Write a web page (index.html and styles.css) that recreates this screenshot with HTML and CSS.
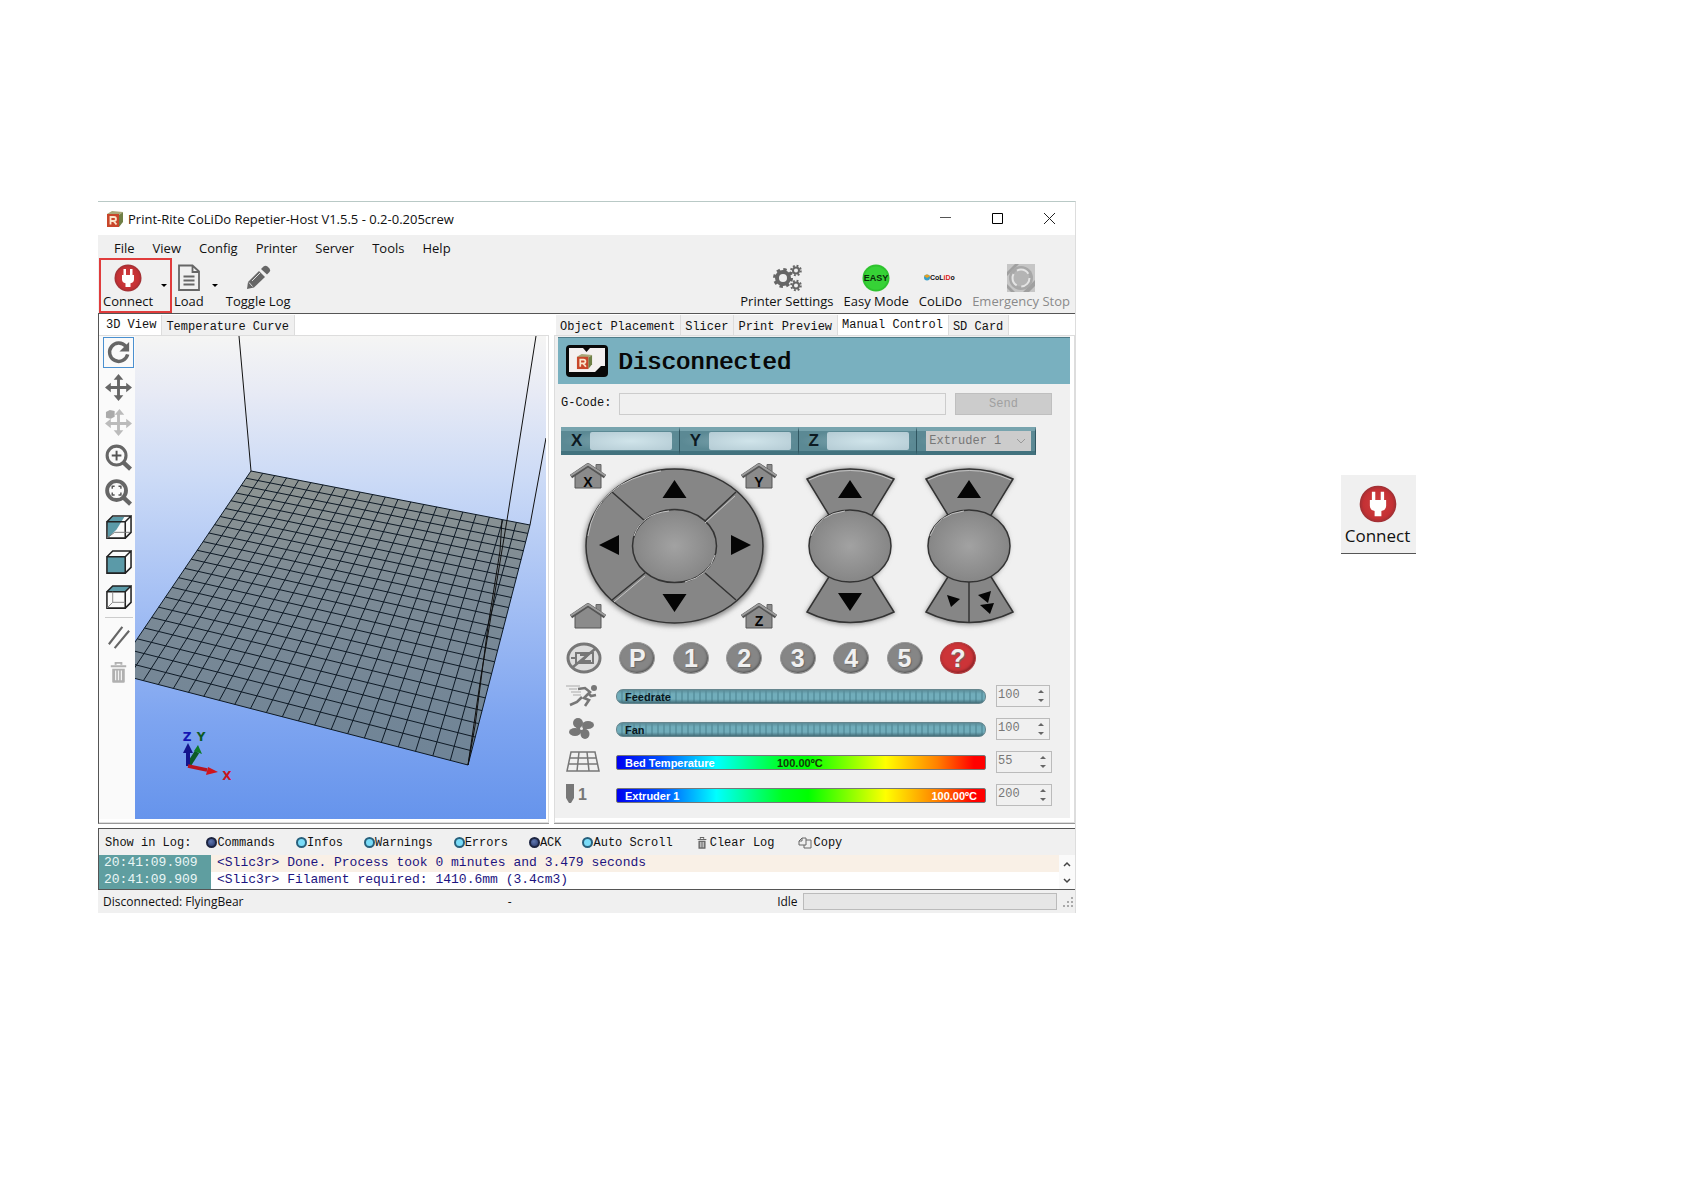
FILE: index.html
```html
<!DOCTYPE html>
<html lang="en">
<head>
<meta charset="utf-8">
<title>Print-Rite CoLiDo Repetier-Host</title>
<link rel="stylesheet" href="styles.css">
</head>
<body>
<svg class="defs" width="0" height="0" aria-hidden="true">
  <defs>
    <radialGradient id="red"><stop offset="0" stop-color="#d04040"/><stop offset=".8" stop-color="#c43034"/><stop offset="1" stop-color="#9c3034"/></radialGradient>
    <radialGradient id="hub"><stop offset="0" stop-color="#a2a2a2"/><stop offset="1" stop-color="#868686"/></radialGradient>
    <symbol id="plug" viewBox="0 0 28 28">
      <circle cx="14" cy="14" r="13.5" fill="url(#red)"/>
      <path d="M9.500 5h2.500v6h4V5h2.500v6H20v4.500q0 3-3.500 3.700V23h-5v-3.800Q8 18.500 8 15.500V11h1.500z" fill="#fff"/>
    </symbol>
    <symbol id="cube-r" viewBox="0 0 18 18">
      <path d="M1 4l5-3 11 1-4 3z" fill="#a9a878"/><path d="M13 5l4-3v10l-4 5z" fill="#6f7f46"/>
      <rect x="1" y="4" width="12" height="13" fill="#c8462a"/>
      <path d="M4.500 14.500V7H8q2 0 2 2t-2 2H5M7.500 11l3 3.500" fill="none" stroke="#fbe6cd" stroke-width="1.800"/>
    </symbol>
    <symbol id="house" viewBox="0 0 36 26">
      <path d="M5 12v13h26V12L18 3z" fill="#8b8b8b" stroke="#555"/>
      <path d="M26 7V1.500h5V12" fill="#8b8b8b" stroke="#666"/>
      <path d="M1 13.500L18 2l17 11.500" fill="none" stroke="#555" stroke-width="4"/>
      <path d="M1 12.500L18 1.500l17 11" fill="none" stroke="#9c9c9c" stroke-width="2"/>
    </symbol>
    <symbol id="trash" viewBox="0 0 18 22">
      <path d="M6 3V1h6v2M1 4.500h16" fill="none" stroke="currentColor" stroke-width="2"/>
      <path d="M2.500 7h13v13.500q0 1-1 1h-11q-1 0-1-1z" fill="currentColor"/>
      <path d="M6 9v10M9 9v10M12 9v10" stroke="#f2f2f2" stroke-width="1.300"/>
    </symbol>
  </defs>
</svg>

<main class="page">
  <section class="window">
    <header class="titlebar">
      <svg class="app-icon" width="18" height="18"><use href="#cube-r"/></svg>
      <h1 class="title">Print-Rite CoLiDo Repetier-Host V1.5.5 - 0.2-0.205crew</h1>
      <button class="winbtn" aria-label="Minimize"><svg width="11" height="11"><path d="M0 4.500h11" stroke="#555"/></svg></button>
      <button class="winbtn" aria-label="Maximize"><svg width="11" height="11"><path d="M.5.5h10v10H.5z" fill="none" stroke="#000"/></svg></button>
      <button class="winbtn" aria-label="Close"><svg width="11" height="11"><path d="M0 0l11 11M11 0L0 11" stroke="#222"/></svg></button>
    </header>
    <nav class="menubar">
      <button>File</button><button>View</button><button>Config</button><button>Printer</button><button>Server</button><button>Tools</button><button>Help</button>
    </nav>
    <div class="toolbar">
      <div class="tool-group marked">
        <button class="tool"><svg width="28" height="28"><use href="#plug"/></svg>Connect</button>
        <button class="drop" aria-label="Connect options"></button>
      </div>
      <div class="tool-group">
        <button class="tool"><svg width="28" height="28" viewBox="0 0 28 28"><path d="M4 1.500h13.500l6.500 6v18.500H4zM17.500 1.500v6.500H24M8.500 12.500h11M8.500 16.500h11M8.500 20.500h11" fill="none" stroke="#666" stroke-width="1.800"/></svg>Load</button>
        <button class="drop" aria-label="Load options"></button>
      </div>
      <button class="tool"><svg width="28" height="28" viewBox="0 0 28 28"><path d="M3 25l1-7L15 7l6 6-11 10.500z" fill="#666"/><path d="M17 5l2.500-2.500q2-1.500 4 0l2 2q1.500 2 0 3.500L23 10.500z" fill="#666"/><path d="M5 18.500l3.500 4M8 17l8-8" stroke="#ddd" fill="none"/></svg>Toggle Log</button>
      <span class="spacer"></span>
      <button class="tool"><svg width="30" height="28" viewBox="0 0 30 28" fill="none" stroke="#666"><circle cx="11" cy="14" r="6" stroke-width="4"/><circle cx="11" cy="14" r="8.500" stroke-width="3" stroke-dasharray="3.340 3.340"/><circle cx="24" cy="6.500" r="3" stroke-width="2"/><circle cx="24" cy="6.500" r="4.800" stroke-width="2" stroke-dasharray="1.890 1.880"/><circle cx="24" cy="21.500" r="3" stroke-width="2"/><circle cx="24" cy="21.500" r="4.800" stroke-width="2" stroke-dasharray="1.890 1.880"/></svg>Printer Settings</button>
      <button class="tool"><svg width="28" height="28" viewBox="0 0 28 28"><circle cx="14" cy="14" r="13.500" fill="#2ec32e"/><circle cx="14" cy="14" r="11.500" fill="#36d236"/><text x="14" y="17" text-anchor="middle" class="easy">EASY</text></svg>Easy Mode</button>
      <button class="tool"><svg width="34" height="28" viewBox="0 0 34 28"><circle cx="4" cy="13.500" r="3" fill="#39a0c8"/><path d="M1 12q3-3 6 0l-3 2z" fill="#e8a020"/><text x="7" y="16" class="brand">CoL<tspan fill="#d22">iD</tspan>o</text></svg>CoLiDo</button>
      <button class="tool" disabled><svg width="28" height="28" viewBox="0 0 28 28"><path d="M0 0h28v28H0z" fill="#c6c6c6"/><path d="M0 8L8 0h4L0 12zM16 28L28 16v6l-6 6zM0 20l8 8H4l-4-4z" fill="#a0a0a0"/><circle cx="14" cy="14" r="12" fill="#a8a8a8"/><circle cx="14" cy="14" r="8.500" fill="#b4b4b4" stroke="#e4e4e4" stroke-width="2" stroke-dasharray="13 4.800"/></svg>Emergency Stop</button>
    </div>

    <div class="panes">
      <section class="pane pane-view">
        <div class="tabs" role="tablist">
          <button role="tab" aria-selected="true">3D View</button><button role="tab" aria-selected="false">Temperature Curve</button>
        </div>
        <div class="view-body">
          <div class="view-tools">
            <button class="vt on" aria-label="Rotate"><svg viewBox="0 0 28 28"><path d="M21.500 7.500A9.500 9.500 0 1 0 23.500 16" fill="none" stroke="#666" stroke-width="3.600"/><path d="M25 3v10H15z" fill="#666"/></svg></button>
            <button class="vt" aria-label="Move view"><svg viewBox="0 0 28 28"><path d="M14 4v20M4 14h20" stroke="#666" stroke-width="3"/><path d="M14 0l5 6H9zM14 28l5-6H9zM0 14l6-5v10zM28 14l-6-5v10z" fill="#666"/></svg></button>
            <button class="vt" aria-label="Move object" disabled><svg viewBox="0 0 28 28"><path d="M14 4v20M4 15h20" stroke="#bbb" stroke-width="3"/><path d="M15 0l5 6H10zM14 28l5-6H9zM0 15l6-5v10zM28 15l-6-5v10z" fill="#bbb"/><path d="M1 3l4-2 5 1v6l-4 2-5-1z" fill="#aaa"/></svg></button>
            <button class="vt" aria-label="Zoom in"><svg viewBox="0 0 28 28"><circle cx="12" cy="12" r="9.800" fill="none" stroke="#666" stroke-width="3.200"/><path d="M19 19l7.500 7" stroke="#666" stroke-width="4.500"/><path d="M12 7v10M7 12h10" stroke="#555" stroke-width="2"/></svg></button>
            <button class="vt" aria-label="Fit view"><svg viewBox="0 0 28 28"><circle cx="12" cy="12" r="9.800" fill="none" stroke="#666" stroke-width="4"/><path d="M19 19l7.500 7" stroke="#666" stroke-width="4.500"/><path d="M7.500 10V7.500H10M14 7.500h2.500V10M16.500 14v2.500H14M10 16.500H7.500V14" fill="none" stroke="#555" stroke-width="1.500"/></svg></button>
            <button class="vt" aria-label="Perspective"><svg viewBox="0 0 28 28"><path d="M2 8l6-5h12L12 16l-9 9z" fill="#5b9aa8"/><path d="M2 8h19v17H2zM2 8l6-6h19l-6 6M27 2v17l-6 6" fill="none" stroke="#222" stroke-width="1.600"/><path d="M10 19h16M2 25l8-6" stroke="#777" fill="none"/></svg></button>
            <button class="vt" aria-label="Front view"><svg viewBox="0 0 28 28"><path d="M2 8h19v17H2z" fill="#5b9aa8"/><path d="M2 8h19v17H2zM2 8l6-6h19l-6 6M27 2v17l-6 6" fill="none" stroke="#222" stroke-width="1.600"/></svg></button>
            <button class="vt" aria-label="Top view"><svg viewBox="0 0 28 28"><path d="M2 8l6-6h19l-6 6z" fill="#5b9aa8"/><path d="M2 8h19v17H2zM2 8l6-6h19l-6 6M27 2v17l-6 6" fill="none" stroke="#222" stroke-width="1.600"/><path d="M8 8v11h13M2 25l6-6" stroke="#888" fill="none"/></svg></button>
            <hr>
            <button class="vt" aria-label="Parallel projection"><svg viewBox="0 0 28 28"><path d="M4 21L18 3M10 25L25 7" stroke="#666" stroke-width="2.200"/></svg></button>
            <button class="vt" aria-label="Delete" disabled><svg viewBox="-5 -3 28 28"><use href="#trash" width="18" height="22"/></svg></button>
          </div>
          <svg class="scene" viewBox="0 0 411 483" preserveAspectRatio="xMidYMid slice" role="img" aria-label="Print bed">
            <defs>
              <linearGradient id="sky" x2="0" y2="1"><stop offset="0" stop-color="#f5f5f4"/><stop offset=".12" stop-color="#e7eaf5"/><stop offset=".3" stop-color="#cbdaf6"/><stop offset=".55" stop-color="#a4bff4"/><stop offset=".8" stop-color="#7da4f0"/><stop offset="1" stop-color="#6694ec"/></linearGradient>
              <linearGradient id="bed" x2="0" y2="1"><stop offset="0" stop-color="#8f9592"/><stop offset=".4" stop-color="#7c8a95"/><stop offset="1" stop-color="#6f8497"/></linearGradient>
            </defs>
            <rect width="411" height="483" fill="url(#sky)"/>
            <path d="M116 135L395 189 333 429-21 337z" fill="url(#bed)"/>
            <path id="mesh" d="" fill="none" stroke="#0e1a26"/>
            <path d="M104 0L116 135M401 0L372 184 346 340 333 429M411 102L395 189M367 184L365 215 353 290 340 390 333 429" fill="none" stroke="#111"/>
            <path d="M53 430L62 416" stroke="#0d5a26" stroke-width="5"/><path d="M63 409l4 9-8-3z" fill="#0d7a26"/>
            <path d="M53 430V414" stroke="#14148c" stroke-width="4"/><path d="M53 407l5 10H48z" fill="#14148c"/>
            <path d="M53 430L72 434" stroke="#b81420" stroke-width="3.500"/><path d="M83 436l-12 3 2-8z" fill="#d0141c"/>
            <text x="52" y="405" class="axis" fill="#1414b4">Z</text><text x="66" y="405" class="axis" fill="#0d5a26">Y</text><text x="92" y="444" class="axis" fill="#c8141c">X</text>
          </svg>
        </div>
      </section>

      <section class="pane pane-control">
        <div class="tabs" role="tablist">
          <button role="tab" aria-selected="false">Object Placement</button><button role="tab" aria-selected="false">Slicer</button><button role="tab" aria-selected="false">Print Preview</button><button role="tab" aria-selected="true">Manual Control</button><button role="tab" aria-selected="false">SD Card</button>
        </div>
        <div class="control-body">
          <div class="status-head">
            <svg width="42" height="32" viewBox="0 0 42 32"><rect width="42" height="32" rx="4" fill="#080808"/><path d="M3 3h14l3.500 4L24 3h15v18h-4l-6 6H3z" fill="#f4f0f0"/><use href="#cube-r" x="10" y="8" width="17" height="17"/></svg>
            <h2>Disconnected</h2>
          </div>
          <form class="gcode">
            <label for="gcode">G-Code:</label>
            <input id="gcode" type="text" disabled>
            <button type="button" disabled>Send</button>
          </form>
          <div class="jog">
            <div class="coords">
              <label class="coord">X<input type="text" readonly></label>
              <label class="coord">Y<input type="text" readonly></label>
              <label class="coord">Z<input type="text" readonly></label>
              <div class="coord pick">
                <select aria-label="Extruder" disabled><option>Extruder 1</option></select>
                <svg width="10" height="6"><path d="M1 1l4 4 4-4" fill="none" stroke="#999"/></svg>
              </div>
            </div>
            <svg class="pads" viewBox="0 0 468 174" role="group" aria-label="Jog controls">
              <defs><filter id="soft" x="-20%" y="-20%" width="140%" height="140%"><feGaussianBlur stdDeviation="2.500"/></filter></defs>
              <g fill="#888" filter="url(#soft)">
                <ellipse cx="114" cy="89" rx="91" ry="79"/>
                <path id="hourglass" d="M245 20Q289 0 334 20L312 54Q345 88 312 120L334 155Q289 178 245 155L267 120Q233 88 267 54z"/>
                <use href="#hourglass" x="119"/>
              </g>
              <g fill="#868686" stroke="#333" stroke-width="1.500">
                <ellipse cx="113.500" cy="88" rx="88.500" ry="77"/>
                <path d="M51 34L84 63M175 34L144 63M51 142L84 115M175 142L144 115"/>
                <ellipse cx="113.500" cy="88" rx="42" ry="36.500" fill="url(#hub)"/>
                <g id="zpad">
                  <path d="M246 21Q289 1 333 21L308 62H271z"/>
                  <path d="M271 114h37l25 40Q289 175 246 154z"/>
                  <ellipse cx="289" cy="88" rx="41" ry="36" fill="url(#hub)"/>
                </g>
                <use href="#zpad" x="119"/>
                <path d="M408 124v41"/>
              </g>
              <g fill="none" stroke="#c4c4c4">
                <path d="M27 78Q35 24 100 13M73 78Q80 56 108 53M250 78Q258 56 284 53M369 78Q377 56 403 53M144 65L174 38M53 144L84 118M248 22Q289 3 331 22M367 22Q408 3 450 22M154 97Q148 118 124 124"/>
              </g>
              <path d="M113.500 22l12 18h-24zM113.500 154l12-18h-24zM38 87l20-10v20zM190 87l-20-10v20zM289 22l12 18h-24zM289 153l12-18h-24zM408 22l12 18h-24zM386 137l13 4-9 8zM417 137l13-4-3 12zM419 147l14-2-4 11z" fill="#050505"/>
              <use href="#house" x="9" y="5" width="36" height="26"/><use href="#house" x="180" y="5" width="36" height="26"/><use href="#house" x="9" y="145" width="36" height="26"/><use href="#house" x="180" y="145" width="36" height="26"/>
              <text x="27" y="29" class="home">X</text><text x="198" y="29" class="home">Y</text><text x="198" y="168" class="home">Z</text>
            </svg>
          </div>
          <div class="rounds">
            <button class="round off" aria-label="Motors off"><svg width="36" height="32" viewBox="0 0 36 32"><ellipse cx="18" cy="16" rx="16" ry="14" fill="#ddd" stroke="#777" stroke-width="3"/><path d="M5 16h5M10 11h17v10H10zM14 13h8l-6 6h9" fill="none" stroke="#777" stroke-width="2"/><path d="M7 25L29 7" stroke="#777" stroke-width="2.500"/></svg></button>
            <button class="round">P</button><button class="round">1</button><button class="round">2</button><button class="round">3</button><button class="round">4</button><button class="round">5</button><button class="round help">?</button>
          </div>
          <div class="sliders">
            <div class="row">
              <svg width="34" height="24" viewBox="0 0 34 24"><circle cx="28" cy="4" r="3" fill="#777"/><path d="M12 5l7-1 5 4-6 6 5 2-4 6M16 13l-5 5-7 3M22 9l3 3 5-1" fill="none" stroke="#777" stroke-width="2.600"/><path d="M0 2h14M3 5h8M5 8h10M7 11h8" stroke="#aaa"/></svg>
              <div class="bar"><input id="feed" type="range" disabled><label for="feed">Feedrate</label></div>
              <div class="spin"><input type="number" value="100" aria-label="Feedrate percent" disabled><span class="arrows"><i></i><i></i></span></div>
            </div>
            <div class="row">
              <svg width="34" height="24" viewBox="0 0 34 24" fill="#777"><ellipse cx="12" cy="6" rx="5" ry="5"/><ellipse cx="22" cy="8" rx="6" ry="4"/><ellipse cx="9" cy="15" rx="6" ry="4"/><ellipse cx="19" cy="17" rx="4.500" ry="5"/><path d="M9 9l3-3 9 11-4 2zM9 17l-1-4 14-6 1 4z"/><circle cx="15.500" cy="11.500" r="1.500" fill="#eee"/></svg>
              <div class="bar"><input id="fan" type="range" disabled><label for="fan">Fan</label></div>
              <div class="spin"><input type="number" value="100" aria-label="Fan percent" disabled><span class="arrows"><i></i><i></i></span></div>
            </div>
            <div class="row wide">
              <svg width="34" height="24" viewBox="0 0 34 24"><path d="M5 2h24l4 19H1zM3.500 8h27M2.500 14h29M13 2l-2 19M21 2l2 19" fill="none" stroke="#777" stroke-width="1.500"/></svg>
              <div class="bar heat"><span>Bed Temperature</span><b class="mid">100.00ºC</b></div>
              <div class="spin"><input type="number" value="55" aria-label="Bed temperature" disabled><span class="arrows"><i></i><i></i></span></div>
            </div>
            <div class="row wide">
              <svg width="34" height="24" viewBox="0 0 34 24"><path d="M0 1h8v14l-3 5H3l-3-5z" fill="#777"/><text x="12" y="17" class="extruder-no">1</text></svg>
              <div class="bar heat"><span>Extruder 1</span><b class="end">100.00ºC</b></div>
              <div class="spin"><input type="number" value="200" aria-label="Extruder temperature" disabled><span class="arrows"><i></i><i></i></span></div>
            </div>
          </div>
        </div>
      </section>
    </div>

    <section class="log">
      <div class="log-bar">
        <span class="log-title">Show in Log:</span>
        <div class="filters">
          <label><input type="checkbox">Commands</label>
          <label><input type="checkbox" checked>Infos</label>
          <label><input type="checkbox" checked>Warnings</label>
          <label><input type="checkbox" checked>Errors</label>
          <label><input type="checkbox">ACK</label>
          <label><input type="checkbox" checked>Auto Scroll</label>
          <button><svg width="12" height="12" color="#666"><use href="#trash"/></svg>Clear Log</button>
          <button><svg width="14" height="12" viewBox="0 0 14 12"><path d="M4 1h4v7H1V4zM4 1v3H1M8 3h5v8H6V8" fill="none" stroke="#666"/></svg>Copy</button>
        </div>
      </div>
      <div class="log-view">
        <table>
          <tr><td class="time">20:41:09.909</td><td>&lt;Slic3r&gt; Done. Process took 0 minutes and 3.479 seconds</td></tr>
          <tr><td class="time">20:41:09.909</td><td>&lt;Slic3r&gt; Filament required: 1410.6mm (3.4cm3)</td></tr>
        </table>
        <div class="scroll">
          <svg width="8" height="6"><path d="M1 5l3-3 3 3" fill="none" stroke="#444" stroke-width="1.500"/></svg>
          <svg width="8" height="6"><path d="M1 1l3 3 3-3" fill="none" stroke="#444" stroke-width="1.500"/></svg>
        </div>
      </div>
    </section>
    <footer class="statusbar">
      <span class="conn">Disconnected: FlyingBear</span><span class="dash">-</span><span class="idle">Idle</span>
      <span class="progress"></span>
      <svg width="10" height="10"><path d="M8 0h2v2H8zM4 4h2v2H4zM8 4h2v2H8zM0 8h2v2H0zM4 8h2v2H4zM8 8h2v2H8z" fill="#aaa"/></svg>
    </footer>
  </section>

  <aside class="side">
    <button class="card"><svg width="38" height="38"><use href="#plug"/></svg>Connect</button>
  </aside>
</main>
<script src="script.js"></script>
</body>
</html>
```
FILE: script.js
```js
// Print bed mesh: a square grid projected onto the bed's four corners.
const corners = [[116, 135], [395, 189], [333, 429], [-21, 337]];
const cells = 22;

function projector([[x0, y0], [x1, y1], [x2, y2], [x3, y3]]) {
  const dx1 = x1 - x2, dx2 = x3 - x2, sx = x0 - x1 + x2 - x3;
  const dy1 = y1 - y2, dy2 = y3 - y2, sy = y0 - y1 + y2 - y3;
  const det = dx1 * dy2 - dx2 * dy1;
  const g = (sx * dy2 - dx2 * sy) / det;
  const h = (dx1 * sy - sx * dy1) / det;
  return (u, v) => {
    const w = g * u + h * v + 1;
    const x = ((x1 - x0 + g * x1) * u + (x3 - x0 + h * x3) * v + x0) / w;
    const y = ((y1 - y0 + g * y1) * u + (y3 - y0 + h * y3) * v + y0) / w;
    return x.toFixed(1) + " " + y.toFixed(1);
  };
}

const at = projector(corners);
let d = "";
for (let i = 0; i <= cells; i++) {
  const t = i / cells;
  d += `M${at(t, 0)}L${at(t, 1)}M${at(0, t)}L${at(1, t)}`;
}
document.getElementById("mesh").setAttribute("d", d);
```
FILE: styles.css
```css
* { box-sizing: border-box; }
body { margin: 0; background: #fff; color: #111; font: 12px/16px "Open Sans", "Noto Sans", sans-serif; }
button, input, select { font: inherit; color: inherit; margin: 0; padding: 0; border: 0; background: none; border-radius: 0; }
svg { display: block; flex: none; }
.defs { position: absolute; }

.page { display: grid; grid-template-columns: 978fr 608fr; align-items: start; padding: 201px 0 0 98px; }
.window { background: #f0f0f0; border-top: 1px solid #b9c9c6; border-right: 1px solid #ddd; min-width: 0; }

.titlebar { display: flex; align-items: center; height: 33px; background: #fff; padding-left: 8px; }
.title { flex: 1; margin: 0 0 0 4px; font-size: 13px; font-weight: 400; white-space: nowrap; }
.winbtn { width: 52px; height: 33px; display: grid; place-items: center; }

.menubar { display: flex; gap: 18px; height: 23px; padding: 2px 16px 0; font-size: 13px; }

.toolbar { display: flex; height: 55px; padding: 0 2px 0 1px; }
.tool-group { display: flex; }
.tool { display: flex; flex-direction: column; align-items: center; padding: 6px 3px 0; font-size: 13px; line-height: 18px; white-space: nowrap; margin-right: 4px; }
.tool:last-child { margin-right: 0; }
.tool:disabled { color: #8a8a8a; }
.tool-group .tool { margin: 0; padding: 6px 1px 0; }
.marked { width: 73px; border: 2px solid #e03c3c; justify-content: space-between; margin-right: 1px; }
.marked .tool { padding: 4px 0 0 2px; }
.drop { width: 12px; display: grid; place-items: center; }
.drop::before { content: ""; border: 3px solid transparent; border-top-color: #000; border-bottom: 0; }
.tool-group:not(.marked) .drop { margin: 0 2px 0 4px; }
.spacer { flex: 1; }
.easy { font: bold 9px "Liberation Sans", sans-serif; fill: #0a2a0a; }
.brand { font: bold 7px "Liberation Sans", sans-serif; fill: #111; }

.panes { display: grid; grid-template-columns: 451fr 521fr; gap: 5px; padding-bottom: 4px; background: #fff; border-top: 1px solid #555; }
.pane { display: flex; flex-direction: column; min-width: 0; border-bottom: 1px solid #999; font-family: "Liberation Mono", monospace; }
.pane-view { border-left: 1px solid #555; }
.tabs { display: flex; height: 21px; padding: 1px 0 0; }
.tabs button { height: 20px; padding: 3px 5px 0 4px; background: #f0f0f0; border-right: 1px solid #ddd; white-space: nowrap; }
.tabs button[aria-selected="true"] { background: #fff; padding-bottom: 2px; padding-top: 1px; }
.pane-view .tabs button:first-child { padding-left: 7px; padding-right: 5px; }
.pane-control .tabs { padding-left: 2px; }

.view-body { flex: 1; display: flex; border: 1px solid #ddd; border-left: 0; padding: 0 2px 3px 0; }
.view-tools { flex: none; width: 36px; padding: 1px 1px 0 4px; background: #fafafa; display: flex; flex-direction: column; gap: 4px; }
.vt { height: 31px; display: grid; place-items: center; }
.vt svg { width: 27px; height: 27px; }
.vt.on { border: 1px solid #4a90d0; }
.vt:disabled { color: #b0b0b0; }
.view-tools hr { width: 28px; margin: 0 auto; border: 0; border-top: 1px solid #ccc; }
.scene { flex: 1; min-width: 0; height: 483px; }
.axis { font: bold 12px "DejaVu Sans", sans-serif; text-anchor: middle; }

.control-body { flex: 1; border: 1px solid #ddd; padding: 1px 4px 2px 3px; background: #f0f0f0; box-shadow: inset -2px -2px 0 2px #fff; }
.status-head { display: flex; align-items: center; gap: 10px; height: 47px; padding: 0 8px; background: #79b0bf; border-top: 1px solid #4f7c88; }
.status-head h2 { margin: 0; padding-top: 3px; font: 24px/32px "Liberation Mono", monospace; color: #080808; text-shadow: 1px 0 #080808; }
.gcode { display: flex; align-items: center; height: 22px; margin: 9px 18px 0 3px; }
.gcode label { width: 58px; padding-bottom: 3px; }
.gcode input { flex: 1; min-width: 0; height: 22px; border: 1px solid #ccc; }
.gcode button { width: 97px; height: 22px; margin-left: 9px; background: #ccc; border: 1px solid #bfbfbf; color: #a0a0a0; }

.jog { margin: 12px 34px 0 3px; }
.coords { display: grid; grid-template-columns: repeat(4, minmax(0, 1fr)); }
.coord { display: flex; align-items: center; min-width: 0; height: 28px; padding: 0 7px 0 10px; font: bold 17px "Liberation Sans", sans-serif; color: #0c1a22; background: radial-gradient(ellipse at center, #7fa6b0, #5b8994 70%); border: 3px solid #42727e; border-width: 4px 1px 4px 0; border-top-color: #78a4ae; border-right-color: #2f5560; gap: 8px; }
.coord input { flex: 1; min-width: 0; height: 18px; border-radius: 2px; background: radial-gradient(#d0e4ea, #b4cbd4); }
.pick { position: relative; padding: 0 4px 0 9px; }
.pick select { width: 100%; height: 20px; padding-left: 3px; appearance: none; opacity: 1; background: #ccc; color: #777; font: 12px "Liberation Mono", monospace; }
.pick svg { position: absolute; right: 9px; top: 7px; }
.pads { width: calc(100% - 7px); height: auto; margin-top: 3px; }
.home { font: bold 14px "Liberation Sans", sans-serif; text-anchor: middle; fill: #050505; }

.rounds { display: flex; justify-content: space-between; margin: 10px 94px 0 8px; }
.round { width: 36px; height: 32px; border-radius: 50%; background: #868686; border: 1px solid #999; color: #f0f0f0; font: bold 25px/30px "Liberation Sans", sans-serif; box-shadow: inset -1px -1px 2px #555; text-shadow: 1px 1px 1px #666; }
.round.off { border: 0; background: none; box-shadow: none; }
.round.help { background: #cc3438; border-color: #b04044; box-shadow: inset -1px -1px 3px #7c2024; }

.sliders { display: grid; gap: 11px; margin: 10px 0 10px 8px; }
.row { display: grid; grid-template-columns: 40px 1fr 56px; column-gap: 10px; align-items: center; height: 22px; margin-right: 18px; }
.bar { position: relative; height: 15px; font: bold 11px/15px "Liberation Sans", sans-serif; }
.bar input { appearance: none; display: block; width: 100%; height: 15px; border-radius: 7px; background: linear-gradient(#5c8c98, transparent 30%, transparent 70%, #456f7a), repeating-linear-gradient(90deg, #71adbb 0 4px, #5d97a5 4px 6px); border: 1px solid #66868e; }
.bar input::-webkit-slider-thumb { appearance: none; width: 0; height: 0; }
.bar label { position: absolute; left: 9px; top: 1px; color: #08161c; }
.heat { padding-left: 8px; color: #fff; border: 1px solid #777; border-radius: 2px; line-height: 14px; background: linear-gradient(90deg, #0000f0, #0050ff 12%, #00ffff 27%, #00ff20 45%, #00ff00 52%, #ffff00 73%, #ff8000 87%, #ff0000 97%); }
.heat b { position: absolute; top: 0; }
.mid { left: 160px; color: #123a08; }
.end { right: 8px; }
.spin { display: flex; width: 54px; height: 22px; border: 1px solid #bbb; color: #777; }
.wide .spin { width: 56px; }
.spin input { flex: 1; min-width: 0; padding: 0 0 2px 1px; appearance: textfield; }
.spin input::-webkit-inner-spin-button { appearance: none; }
.arrows { width: 16px; display: grid; place-items: center; padding: 1px 0; }
.arrows i { border: 3px solid transparent; border-bottom-color: #666; border-top: 0; }
.arrows i + i { border-top: 3px solid #666; border-bottom: 0; }
.extruder-no { font: bold 16px "Liberation Sans", sans-serif; fill: #777; }

.log { border: 1px solid #555; border-right: 0; font-family: "Liberation Mono", monospace; }
.log-bar { display: flex; align-items: center; height: 26px; padding: 1px 0 0 6px; white-space: nowrap; }
.log-title { margin-right: 15px; }
.filters { display: flex; gap: 21px; }
.filters label, .filters button { display: flex; align-items: center; }
.filters button { gap: 2px; margin-left: 2px; }
.filters input { appearance: none; width: 11px; height: 11px; border: 2px solid #1c2440; border-radius: 50%; background: radial-gradient(circle at 40% 35%, #6078b0, #28386c); }
.filters input:checked { border-color: #28607c; background: #7adcf8; }
.log-view { display: flex; background: #fff; }
.log-view table { flex: 1; border-collapse: collapse; font-size: 13px; line-height: 16px; color: #1c1480; }
.log-view td { padding: 0 0 1px 6px; white-space: nowrap; }
.log-view tr + tr td { padding-bottom: 1px; }
.log-view tr:first-child { background: #f9f0e6; }
.log-view .time { width: 112px; padding-left: 5px; background: #5f9ea0; color: #eaf6f6; }
.scroll { width: 16px; display: flex; flex-direction: column; align-items: center; justify-content: space-between; padding: 6px 0 5px; background: #fafafa; }

.statusbar { display: flex; align-items: center; height: 23px; padding: 0 2px 0 5px; }
.conn { flex: 404; }
.dash { flex: 269; }
.idle { flex: none; }
.progress { flex: 252; height: 17px; margin: 0 6px 0 5px; background: #e6e6e6; border: 1px solid #bbb; }

.side { padding: 274px 0 0 265px; }
.card { width: 75px; height: 79px; display: flex; flex-direction: column; align-items: center; padding: 10px 2px 0 0; gap: 1px; background: #f0f0f0; border-bottom: 1px solid #555; font-size: 17px; line-height: 24px; }
```
